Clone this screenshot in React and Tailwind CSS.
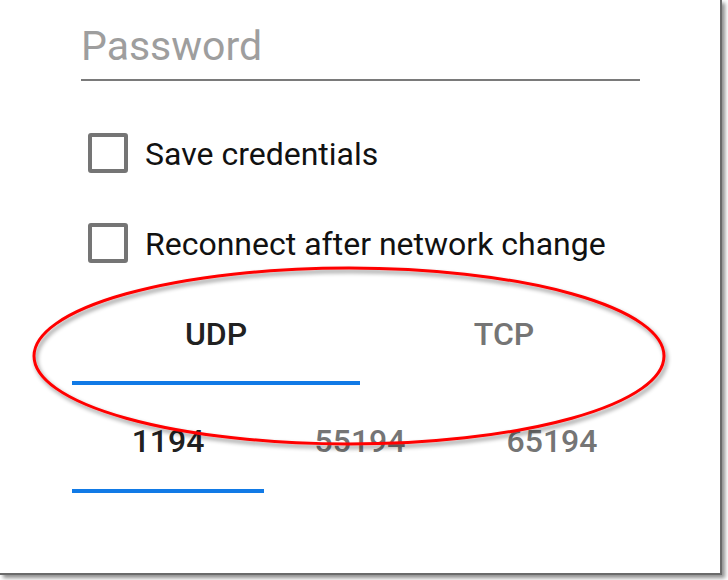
import React from 'react'

const font = { fontFamily: 'Roboto, "Noto Sans", sans-serif' }

function Checkbox({ label }) {
    return (
        <div className="flex items-center">
            <div className="w-[40px] h-[40px] rounded-[3px] border-[4px] border-[#757575] flex-shrink-0" />
            <span className="ml-[17px] text-[32px] leading-none text-[#111] mt-[2px]">{label}</span>
        </div>
    )
}

function Tabs({ items, active, gap }) {
    return (
        <div className="flex w-[576px]">
            {items.map((item, idx) => (
                <div key={item} className="flex-1 flex flex-col items-center">
                    <span className={"text-[32px] leading-none font-medium " + (idx === active ? "text-[#212121]" : "text-[#757575]")}>
                        {item}
                    </span>
                    <div className={"w-full h-[4px] " + gap + " " + (idx === active ? "bg-[#117ae6]" : "bg-transparent")} />
                </div>
            ))}
        </div>
    )
}

export default function App() {
    return (
        <div className="relative w-[728px] h-[580px] bg-white overflow-hidden" style={font}>
            {/* Screenshot frame */}
            <div className="w-[722px] h-[575px] bg-white border-r-2 border-b-2 border-[#6a6a6a] shadow-[3px_3px_4px_rgba(0,0,0,0.45)]">
                {/* Password field */}
                <div className="ml-[81px] pt-[26px] w-[559px]">
                    <div className="h-[55px] border-b-2 border-[#7a7a7a]">
                        <span className="block text-[41px] leading-none text-[#9e9e9e]">Password</span>
                    </div>
                </div>

                {/* Options */}
                <div className="ml-[88px] mt-[52px]">
                    <Checkbox label="Save credentials" />
                </div>
                <div className="ml-[88px] mt-[50px]">
                    <Checkbox label="Reconnect after network change" />
                </div>

                {/* Protocol tabs */}
                <div className="ml-[72px] mt-[55px]">
                    <Tabs items={["UDP", "TCP"]} active={0} gap="mt-[31px]" />
                </div>

                {/* Port tabs */}
                <div className="ml-[72px] mt-[40px]">
                    <Tabs items={["1194", "55194", "65194"]} active={0} gap="mt-[32px]" />
                </div>
            </div>

            {/* Red annotation ellipse */}
            <svg className="absolute left-0 top-0 pointer-events-none" width="728" height="580" viewBox="0 0 728 580">
                <defs>
                    <filter id="sh" x="-10%" y="-20%" width="120%" height="140%">
                        <feDropShadow dx="2" dy="3" stdDeviation="2" floodColor="#000" floodOpacity="0.45" />
                    </filter>
                </defs>
                <ellipse cx="349" cy="356" rx="315" ry="88" fill="none" stroke="#ff0000" strokeWidth="3" filter="url(#sh)" />
            </svg>
        </div>
    )
}
